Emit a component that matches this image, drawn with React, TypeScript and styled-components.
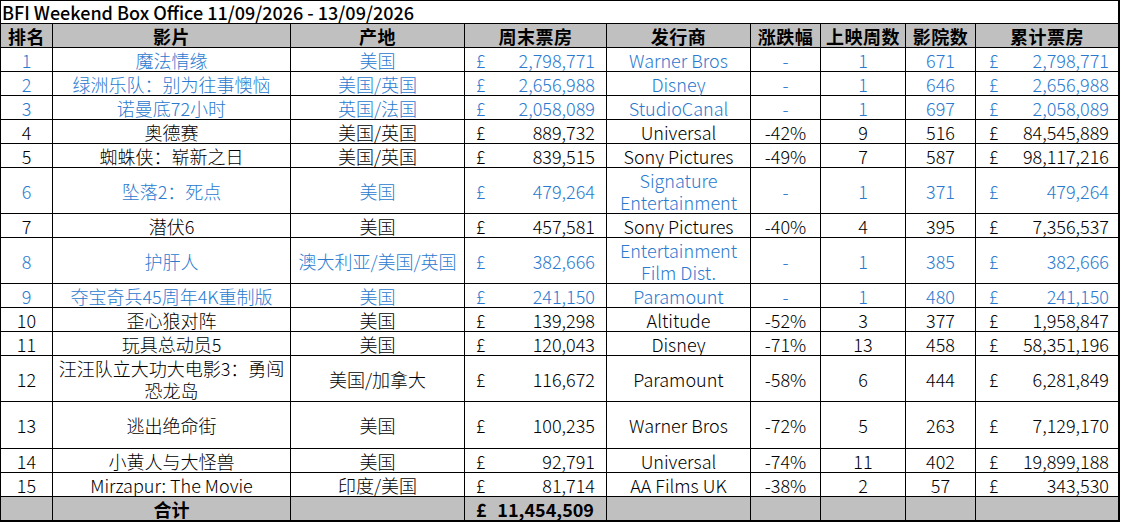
import React from "react";
import styled, { createGlobalStyle } from "styled-components";

const BLUE = "#2a7ad0";

const GlobalStyle = createGlobalStyle`
  html, body { margin: 0; padding: 0; background: #ffffff; }
  body { font-family: "Noto Sans CJK SC", "Noto Sans", sans-serif; }
`;

type Tone = "blue" | "black";

interface Film {
  rank: number;
  title: string;
  origin: string;
  weekend: string;
  distributor: string;
  change: string;
  weeks: string;
  cinemas: string;
  total: string;
  tone: Tone;
  height: number;
}

const films: Film[] = [
  { rank: 1, title: "魔法情缘", origin: "美国", weekend: "2,798,771", distributor: "Warner Bros", change: "-", weeks: "1", cinemas: "671", total: "2,798,771", tone: "blue", height: 23 },
  { rank: 2, title: "绿洲乐队：别为往事懊恼", origin: "美国/英国", weekend: "2,656,988", distributor: "Disney", change: "-", weeks: "1", cinemas: "646", total: "2,656,988", tone: "blue", height: 23 },
  { rank: 3, title: "诺曼底72小时", origin: "英国/法国", weekend: "2,058,089", distributor: "StudioCanal", change: "-", weeks: "1", cinemas: "697", total: "2,058,089", tone: "blue", height: 23 },
  { rank: 4, title: "奥德赛", origin: "美国/英国", weekend: "889,732", distributor: "Universal", change: "-42%", weeks: "9", cinemas: "516", total: "84,545,889", tone: "black", height: 23 },
  { rank: 5, title: "蜘蛛侠：崭新之日", origin: "美国/英国", weekend: "839,515", distributor: "Sony Pictures", change: "-49%", weeks: "7", cinemas: "587", total: "98,117,216", tone: "black", height: 23 },
  { rank: 6, title: "坠落2：死点", origin: "美国", weekend: "479,264", distributor: "Signature\nEntertainment", change: "-", weeks: "1", cinemas: "371", total: "479,264", tone: "blue", height: 45 },
  { rank: 7, title: "潜伏6", origin: "美国", weekend: "457,581", distributor: "Sony Pictures", change: "-40%", weeks: "4", cinemas: "395", total: "7,356,537", tone: "black", height: 23 },
  { rank: 8, title: "护肝人", origin: "澳大利亚/美国/英国", weekend: "382,666", distributor: "Entertainment\nFilm Dist.", change: "-", weeks: "1", cinemas: "385", total: "382,666", tone: "blue", height: 45 },
  { rank: 9, title: "夺宝奇兵45周年4K重制版", origin: "美国", weekend: "241,150", distributor: "Paramount", change: "-", weeks: "1", cinemas: "480", total: "241,150", tone: "blue", height: 23 },
  { rank: 10, title: "歪心狼对阵", origin: "美国", weekend: "139,298", distributor: "Altitude", change: "-52%", weeks: "3", cinemas: "377", total: "1,958,847", tone: "black", height: 23 },
  { rank: 11, title: "玩具总动员5", origin: "美国", weekend: "120,043", distributor: "Disney", change: "-71%", weeks: "13", cinemas: "458", total: "58,351,196", tone: "black", height: 23 },
  { rank: 12, title: "汪汪队立大功大电影3：勇闯\n恐龙岛", origin: "美国/加拿大", weekend: "116,672", distributor: "Paramount", change: "-58%", weeks: "6", cinemas: "444", total: "6,281,849", tone: "black", height: 45 },
  { rank: 13, title: "逃出绝命街", origin: "美国", weekend: "100,235", distributor: "Warner Bros", change: "-72%", weeks: "5", cinemas: "263", total: "7,129,170", tone: "black", height: 46 },
  { rank: 14, title: "小黄人与大怪兽", origin: "美国", weekend: "92,791", distributor: "Universal", change: "-74%", weeks: "11", cinemas: "402", total: "19,899,188", tone: "black", height: 23 },
  { rank: 15, title: "Mirzapur: The Movie", origin: "印度/美国", weekend: "81,714", distributor: "AA Films UK", change: "-38%", weeks: "2", cinemas: "57", total: "343,530", tone: "black", height: 23 },
];

const headers = ["排名", "影片", "产地", "周末票房", "发行商", "涨跌幅", "上映周数", "影院数", "累计票房"];

const Sheet = styled.div<{ $rows: string }>`
  display: grid;
  grid-template-columns: 51px 237px 173px 141px 143px 69px 84px 69px 142px;
  grid-template-rows: ${(p) => p.$rows};
  gap: 1px;
  width: max-content;
  padding: 1px 2px 2px 1px;
  background: #000000;
`;

const Cell = styled.div<{ $tone?: Tone; $shade?: boolean }>`
  display: flex;
  align-items: center;
  justify-content: center;
  text-align: center;
  white-space: pre-line;
  background: ${(p) => (p.$shade ? "#c0c0c0" : "#ffffff")};
  color: ${(p) => (p.$tone === "blue" ? BLUE : "#000000")};
  font-size: 18px;
  line-height: 22px;
  font-weight: 300;
`;

const TitleCell = styled.div`
  grid-column: 1 / -1;
  display: flex;
  align-items: center;
  padding-left: 1px;
  background: #ffffff;
  color: #000000;
  font-size: 18px;
  line-height: 22px;
  font-weight: 500;
`;

const HeaderCell = styled(Cell)`
  font-weight: 700;
  letter-spacing: 0.5px;
`;

const MoneyCell = styled(Cell)<{ $padL: number; $padR: number; $bold?: boolean }>`
  justify-content: space-between;
  padding: 0 ${(p) => p.$padR}px 0 ${(p) => p.$padL}px;
  font-weight: ${(p) => (p.$bold ? 700 : 300)};
`;

const TotalLabel = styled(Cell)`
  font-weight: 700;
`;

const Money: React.FC<{ value: string; tone?: Tone; padL: number; padR: number; shade?: boolean; bold?: boolean }> = ({
  value,
  tone,
  padL,
  padR,
  shade,
  bold,
}) => (
  <MoneyCell $tone={tone} $padL={padL} $padR={padR} $shade={shade} $bold={bold}>
    <span>£</span>
    <span>{value}</span>
  </MoneyCell>
);

export default function App() {
  const rows = ["22px", "23px", ...films.map((f) => `${f.height}px`), "23px"].join(" ");
  return (
    <>
      <GlobalStyle />
      <Sheet $rows={rows}>
        <TitleCell>BFI Weekend Box Office 11/09/2026 - 13/09/2026</TitleCell>
        {headers.map((h) => (
          <HeaderCell key={h} $shade>
            {h}
          </HeaderCell>
        ))}
        {films.map((f) => (
          <React.Fragment key={f.rank}>
            <Cell $tone={f.tone}>{f.rank}</Cell>
            <Cell $tone={f.tone}>{f.title}</Cell>
            <Cell $tone={f.tone}>{f.origin}</Cell>
            <Money value={f.weekend} tone={f.tone} padL={11} padR={11} />
            <Cell $tone={f.tone}>{f.distributor}</Cell>
            <Cell $tone={f.tone}>{f.change}</Cell>
            <Cell $tone={f.tone}>{f.weeks}</Cell>
            <Cell $tone={f.tone}>{f.cinemas}</Cell>
            <Money value={f.total} tone={f.tone} padL={13} padR={9} />
          </React.Fragment>
        ))}
        <Cell $shade />
        <TotalLabel $shade>合计</TotalLabel>
        <Cell $shade />
        <Money value="11,454,509" padL={11} padR={12} shade bold />
        <Cell $shade />
        <Cell $shade />
        <Cell $shade />
        <Cell $shade />
        <Cell $shade />
      </Sheet>
    </>
  );
}
